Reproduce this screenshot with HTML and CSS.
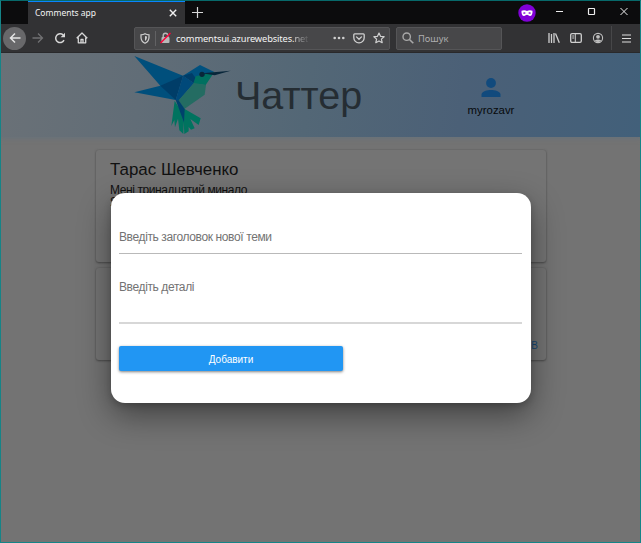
FILE: index.html
```html
<!DOCTYPE html>
<html lang="uk">
<head>
<meta charset="utf-8">
<title>Comments app</title>
<link rel="stylesheet" href="styles.css">
</head>
<body>
<div class="window">
  <div class="tabbar">
    <div class="tab"><span>Comments app</span>
      <svg class="tab-close" width="8" height="8" viewBox="0 0 8 8"><path d="M.8.8l6.4 6.4M7.2.8L.8 7.2" stroke="#f0f0f0" stroke-width="1.4"/></svg>
    </div>
    <svg class="newtab" width="11" height="11" viewBox="0 0 11 11"><path d="M5.500 0v11M0 5.500h11" stroke="#d8d8d8" stroke-width="1.200"/></svg>
    <svg class="mask" width="18" height="18" viewBox="0 0 18 18"><circle cx="9" cy="9" r="8.7" fill="#8000d7"/><path fill="#fff" fill-rule="evenodd" d="M3.500 6.700C5.500 5.800 7.500 6 9 7c1.500-1 3.500-1.200 5.500-.3.300 3-.8 5.300-2.500 5.300-1.400 0-2-1.200-3-1.200S7.400 12 6 12C4.300 12 3.200 9.700 3.500 6.700zM5 8.900c.8 1.200 2 1.200 2.800.2C7 8 5.700 8 5 8.900zm5.200.2c.8 1 2 1 2.800-.2-.7-.9-2-.9-2.800.2z"/></svg>
    <svg class="controls" width="74" height="10" viewBox="0 0 74 10"><g fill="none" stroke="#eee"><path d="M1 4.500h7"/><rect x="33.500" y="1.500" width="6" height="6" rx=".5" stroke-width="1.200"/><path d="M65.500 1l7 7M72.500 1l-7 7"/></g></svg>
  </div>
  <div class="toolbar">
    <div class="back"><svg width="12" height="12" viewBox="0 0 12 12"><path d="M11.500 6H1.500M6 1.500L1.500 6 6 10.500" fill="none" stroke="#e4e4e4" stroke-width="1.500"/></svg></div>
    <svg class="forward" width="12" height="12" viewBox="0 0 12 12"><path d="M.5 6h10M6 1.500L10.500 6 6 10.500" fill="none" stroke="#707072" stroke-width="1.300"/></svg>
    <svg class="reload" width="12" height="12" viewBox="0 0 12 12"><path d="M10 8.200A4.400 4.400 0 1 1 9.200 3" fill="none" stroke="#d8d8d8" stroke-width="1.500"/><path d="M11 .8v4.400H6.600z" fill="#d8d8d8"/></svg>
    <svg class="home" width="12" height="12" viewBox="0 0 12 12"><path d="M.7 6.300L6 1l5.300 5.300M2.300 5.500v5.300h7.400V5.500M5 10.500V7.500h2v3" fill="none" stroke="#d8d8d8" stroke-width="1.300" stroke-linejoin="round"/></svg>
    <div class="urlbar">
      <svg class="shield" width="10" height="11" viewBox="0 0 10 11"><path d="M5 .8c1.200.7 2.500 1 4 1v2.500C9 7.500 7.300 9.300 5 10.300 2.700 9.300 1 7.500 1 4.300V1.800c1.500 0 2.800-.3 4-1z" fill="none" stroke="#cfcfcf" stroke-width="1.200"/><path d="M5 3v5c1.300-.8 2-2.200 2-4.500z" fill="#cfcfcf"/></svg>
      <i class="rule"></i>
      <svg class="lock" width="11" height="12" viewBox="0 0 11 12"><rect x="1.500" y="5" width="8" height="6" rx="1" fill="#b8b8b8"/><path d="M3.200 5V3.500a2.300 2.300 0 0 1 4.600 0V5" fill="none" stroke="#b8b8b8" stroke-width="1.400"/><path d="M.5 11L10.500 1" stroke="#ff0039" stroke-width="1.500"/></svg>
      <span class="address">commentsui.azurewebsites.<b>net</b></span>
      <svg class="dots" width="12" height="4" viewBox="0 0 12 4"><g fill="#d0d0d0"><circle cx="1.700" cy="2" r="1.300"/><circle cx="6" cy="2" r="1.300"/><circle cx="10.300" cy="2" r="1.300"/></g></svg>
      <svg class="pocket" width="12" height="11" viewBox="0 0 12 11"><path d="M1.700.8h8.600q.9 0 .9.900v3a5.200 5.200 0 0 1-10.400 0v-3q0-.9.900-.9zM3.500 3.900L6 6.300l2.500-2.400" fill="none" stroke="#d0d0d0" stroke-width="1.300" stroke-linecap="round"/></svg>
      <svg class="star" width="12" height="12" viewBox="0 0 12 12"><path d="M6 1l1.500 3.300 3.600.4-2.700 2.400.8 3.600L6 8.900l-3.200 1.800.8-3.600L.9 4.700l3.600-.4z" fill="none" stroke="#d0d0d0" stroke-width="1.200" stroke-linejoin="round"/></svg>
    </div>
    <div class="search"><svg width="12" height="12" viewBox="0 0 12 12"><circle cx="4.700" cy="4.700" r="3.700" fill="none" stroke="#a8a8a8" stroke-width="1.400"/><path d="M7.500 7.500l3.800 3.800" stroke="#a8a8a8" stroke-width="1.600"/></svg><span>Пошук</span></div>
    <svg class="library" width="12" height="10" viewBox="0 0 12 10"><path d="M1 0v10M3.500 1v9M6 0v10M7.500.5l3.800 9.200" fill="none" stroke="#d0d0d0" stroke-width="1.300"/></svg>
    <svg class="sidebar" width="12" height="10" viewBox="0 0 12 10"><rect x=".7" y=".7" width="10.600" height="8.600" rx="1.300" fill="none" stroke="#d0d0d0" stroke-width="1.300"/><path d="M5.300 1v8M2.200 3h2M2.200 5h2" stroke="#d0d0d0"/></svg>
    <svg class="account" width="12" height="12" viewBox="0 0 12 12"><circle cx="6" cy="6" r="4.600" fill="none" stroke="#c0c0c0" stroke-width="1.100"/><circle cx="6" cy="4.800" r="1.900" fill="#c0c0c0"/><path d="M2.700 8.500Q6 6.300 9.300 8.500 6 11.500 2.700 8.500z" fill="#c0c0c0"/></svg>
    <i class="toolrule"></i>
    <svg class="menu" width="9" height="9" viewBox="0 0 9 9"><path d="M0 1h9M0 4.500h9M0 8h9" stroke="#ddd" stroke-width="1.200"/></svg>
  </div>
  <div class="page">
    <header>
      <svg class="bird" width="97" height="80" viewBox="26 15 291 240">
        <path fill="#004f7c" d="M27 18L173 77 151 150 27 127 105 107z"/>
        <path fill="#003d68" d="M105 107L173 77l-22 73z"/>
        <path fill="#00497a" d="M173 77l33 22-46 53-9-2z"/>
        <path fill="#00517f" d="M173 77l51-32 43 21-28 12-33 21z"/>
        <path fill="#003d68" d="M173 77l27-8 10 14-4 16z"/>
        <path fill="#007060" d="M211 79l56-13-26 39-37-4z"/>
        <path fill="#246c62" d="M206 99l36 6-4 29-61 43-17-26z"/>
        <path fill="#00735f" d="M148 152l12 20 18 5 48 28-6 20-25-18 13 28-11 4-7-8 0 13-13 8-2-36-1 36-12-11-4-35-9 26-2-22-9 18z"/>
        <path fill="#00416c" d="M151 150l9 1 18 26-2 40z"/>
        <path fill="#08263a" d="M230 70l86-8-48 14z"/><circle cx="230" cy="73" r="8" fill="#08263a"/>
      </svg>
      <h1>Чаттер</h1>
      <div class="user"><svg width="20" height="20" viewBox="0 0 20 20"><circle cx="10" cy="5" r="4.900" fill="#114a7d"/><path fill="#114a7d" d="M.5 19v-2.500C.5 13.300 6.500 12 10 12s9.500 1.300 9.500 4.500V19z"/></svg><span>myrozavr</span></div>
    </header>
    <main>
      <article class="card first"><h2>Тарас Шевченко</h2><p>Мені тринадцятий минало<br>Я пас ягнята за селом.</p></article>
      <article class="card second"><a>ВІДПОВІВ</a></article>
    </main>
    <form class="modal">
      <div class="field title">Введіть заголовок нової теми</div>
      <div class="field details">Введіть деталі</div>
      <button type="button">Добавити</button>
    </form>
  </div>
</div>
</body>
</html>
```
FILE: styles.css
```css
* { box-sizing: border-box; }
body { margin: 0; font-family: "Liberation Sans", Arial, sans-serif; }
svg { display: block; flex: none; }
.window { width: 641px; height: 543px; border: 1px solid #158487; border-top-color: #07696a; overflow: hidden; background: #737373; }
.tabbar { height: 23px; background: #0c0c0d; display: flex; align-items: center; font-family: "Noto Sans", sans-serif; }
.tab { width: 157px; height: 23px; margin-left: 27px; background: #323234; border-top: 1px solid #0a84ff; display: flex; align-items: center; padding: 0 8px 0 7px; justify-content: space-between; color: #f4f4f5; font-size: 8.5px; }
.tab span { position: relative; top: -1px; }
.newtab { margin: -1px 0 0 7px; }
.mask { margin-left: 315px; }
.controls { margin: -1px 0 0 19px; }
.toolbar { height: 29px; background: #323234; border-bottom: 1px solid #29292b; display: flex; align-items: center; font-family: "Noto Sans", sans-serif; }
.back { width: 23px; height: 23px; margin-left: 2px; border-radius: 50%; background: #68686a; display: grid; place-items: center; }
.forward { margin-left: 6px; }
.reload { margin-left: 10px; }
.home { margin-left: 10px; }
.urlbar { width: 256px; height: 23px; margin-left: 46px; background: #474749; border: 1px solid #555557; border-radius: 2px; display: flex; align-items: center; padding-left: 5px; }
.rule { width: 1px; height: 15px; margin: 0 4px 0 5px; background: #626264; }
.address { width: 138px; margin-left: 5px; white-space: nowrap; color: #f4f4f4; font-size: 9.3px; letter-spacing: -.13px; }
.address b { font-weight: 400; background: linear-gradient(90deg, #ddd, #58585a); background-clip: text; color: transparent; }
.dots { margin-left: 19px; }
.pocket { margin-left: 8px; }
.star { margin-left: 8px; }
.search { width: 106px; height: 23px; margin-left: 6px; padding-left: 5px; display: flex; align-items: center; gap: 4px; background: #474749; border: 1px solid #555557; border-radius: 2px; color: #adadaf; font-size: 9.3px; }
.library { margin-left: 46px; }
.sidebar { margin-left: 10px; }
.account { margin-left: 10px; }
.toolrule { width: 1px; height: 24px; margin-left: 7px; background: #474749; }
.menu { margin-left: 10px; }
.page { position: relative; height: 490px; background: #737373; overflow: hidden; }
header { height: 84px; display: flex; background: linear-gradient(97deg, #6a7177 0%, #616d77 22%, #536776 48%, #4b6077 72%, #42607a 100%); box-shadow: 0 2px 4px #69727a; }
.bird { margin: 2px 0 0 133px; }
h1 { width: 128px; margin: 19px 0 0 4px; font-size: 39.5px; line-height: 46px; font-weight: 400; color: #252d33; }
.user { width: 62px; margin: 25px 0 0 97px; display: flex; flex-direction: column; align-items: center; font-size: 11.4px; line-height: 13px; color: #07090b; }
.user span { margin-top: 6px; }
main { margin: 13px 0 0 95px; width: 450px; }
.card { border-radius: 3px; background: #747474; box-shadow: 0 0 2px #5c5c5c, 0 1px 2px #484848; padding: 0 14px; }
.first { height: 112px; padding-top: 10px; overflow: hidden; color: #111; }
h2 { margin: 0; font-size: 16.9px; line-height: 20px; font-weight: 400; }
p { margin: 4px 0 0; font-size: 12px; line-height: 12px; letter-spacing: -.4px; }
.second { height: 92px; margin-top: 6px; padding: 72px 8px 0; text-align: right; font-size: 10px; color: #174a76; }
.modal { position: absolute; left: 109.5px; top: 139.5px; width: 420.5px; height: 210px; padding: 31.5px 8px 0 8.5px; border-radius: 14px; background: #fff; box-shadow: 0 12px 32px rgba(0,0,0,.43), 0 3px 7px rgba(0,0,0,.18); }
.field { color: #737373; font-size: 12px; line-height: 14px; width: 403px; letter-spacing: -.38px; white-space: nowrap; }
.field.title { height: 30px; padding-top: 6px; border-bottom: 1px solid #b9b9b9; }
.field.details { height: 44px; margin-top: 26px; border-bottom: 2px solid #d7d7d7; }
button { display: block; width: 224px; height: 25px; margin-top: 22px; padding: 1px 0 0; border: 0; border-radius: 2px; background: #2196f3; color: #fff; box-shadow: 0 1px 3px rgba(0,0,0,.5); font: 10px "Liberation Sans", Arial, sans-serif; }
```
